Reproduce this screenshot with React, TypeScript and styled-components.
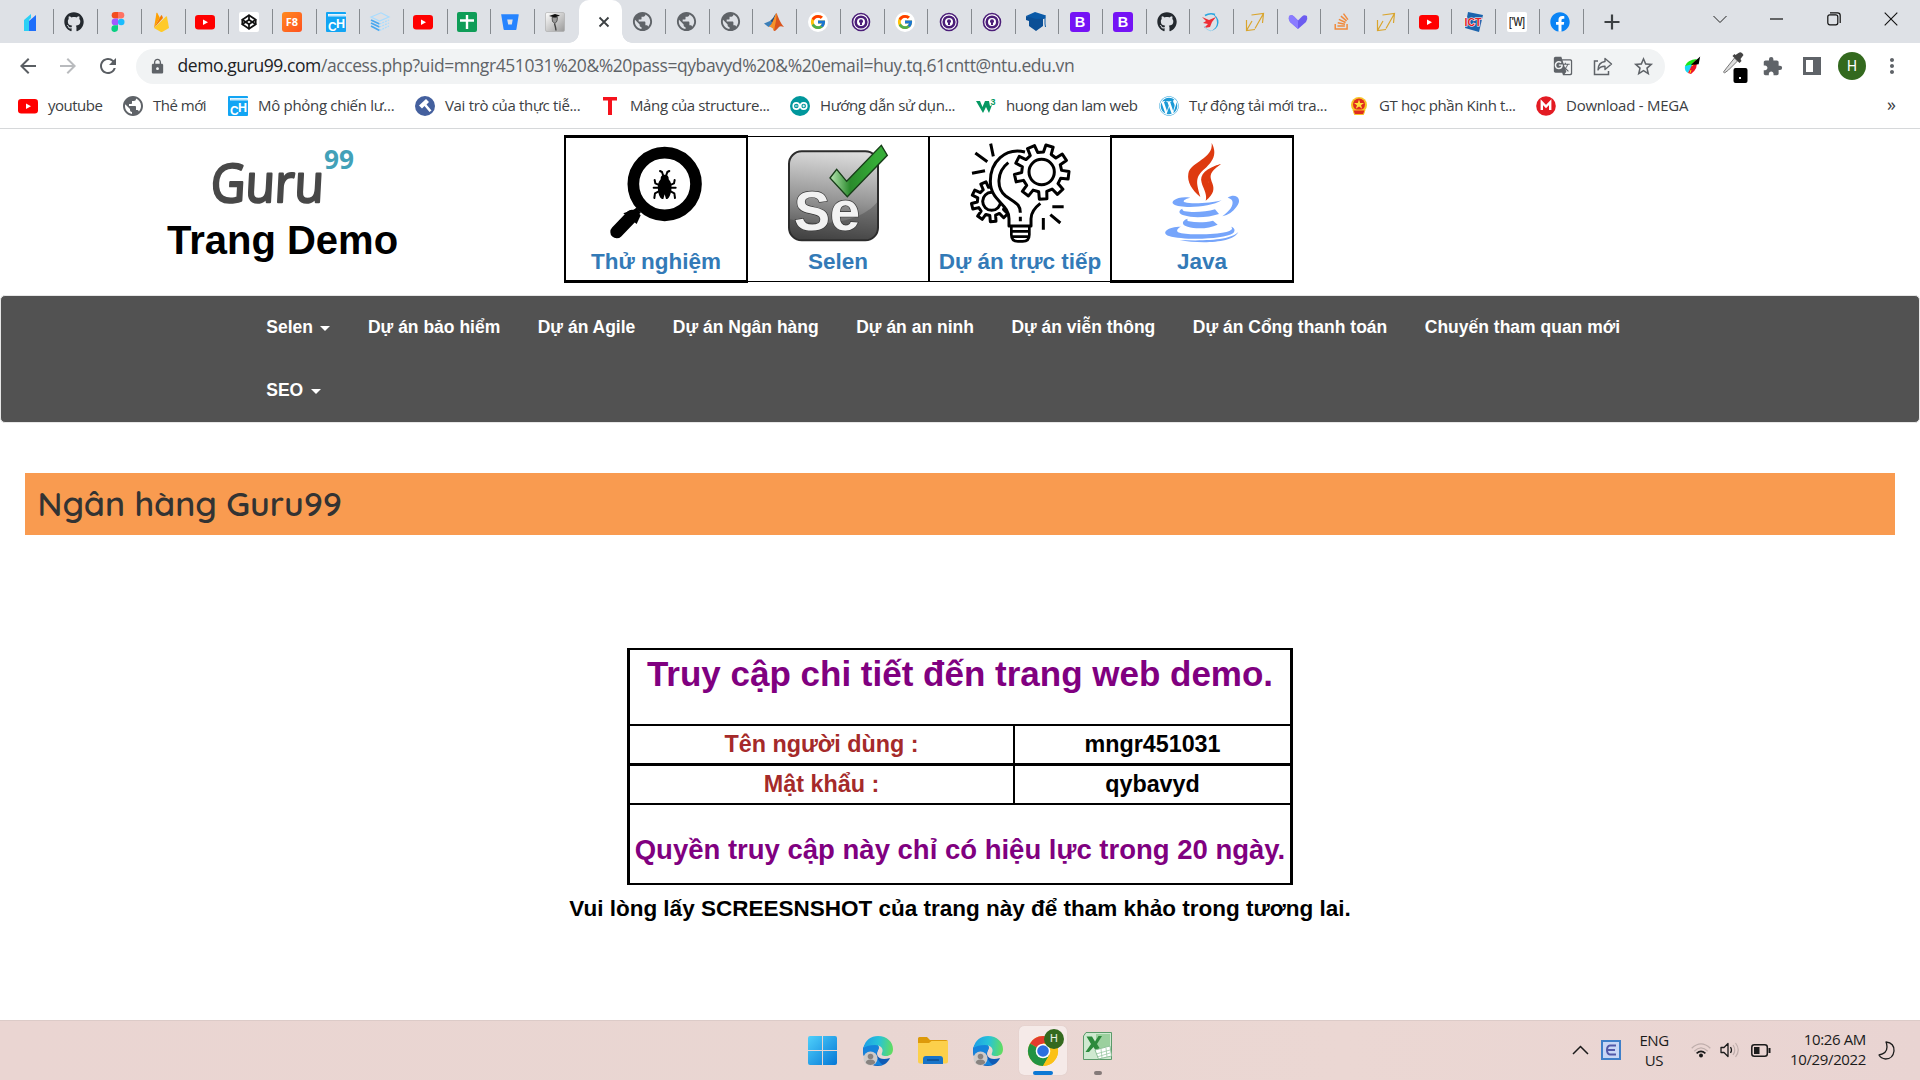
import React from "react";
import styled, { createGlobalStyle, css } from "styled-components";
import { FaGithub, FaBitbucket, FaStackOverflow, FaFacebook, FaWordpress } from "react-icons/fa";
import { FcGoogle } from "react-icons/fc";
import { FiCodepen } from "react-icons/fi";
import { MdArrowBack, MdArrowForward, MdRefresh, MdLock, MdPublic, MdExtension, MdStarBorder, MdGTranslate, MdMoreVert } from "react-icons/md";

const uiFont = `"Segoe UI", "Open Sans", "Noto Sans", sans-serif`;
const pageFont = `Arial, "Liberation Sans", sans-serif`;

const Global = createGlobalStyle`
  * { box-sizing: border-box; }
  html, body { margin: 0; padding: 0; background: #fff; }
  body { overflow: hidden; }
  svg { display: block; flex: none; overflow: visible; }
`;

const Screen = styled.div`
  width: 1920px;
  height: 1080px;
  display: flex;
  flex-direction: column;
  background: #fff;
  font-family: ${pageFont};
`;

/* ---------- tab strip ---------- */

const TabStrip = styled.div`
  height: 43px;
  flex: none;
  display: flex;
  background: #dee1e6;
  padding-left: 10.8px;
`;

const Tab = styled.div<{ $line?: boolean; $shift?: boolean }>`
  width: 43.7px;
  flex: none;
  position: relative;
  display: flex;
  align-items: center;
  padding-left: ${(p) => (p.$shift ? 10.5 : 9.5)}px;
  ${(p) =>
    p.$line &&
    css`
      &::after {
        content: "";
        position: absolute;
        right: 0;
        top: 9px;
        width: 1px;
        height: 25px;
        background: #868a8f;
      }
    `}
`;

const ActiveTab = styled(Tab)`
  background: #fff;
  border-radius: 10px 10px 0 0;
  padding: 0 0 0 6px;
  justify-content: center;
  &::before,
  &::after {
    content: "";
    position: absolute;
    bottom: 0;
    width: 10px;
    height: 10px;
  }
  &::before {
    left: -10px;
    background: radial-gradient(circle at 0 0, transparent 9.5px, #fff 10px);
  }
  &::after {
    right: -10px;
    background: radial-gradient(circle at 100% 0, transparent 9.5px, #fff 10px);
  }
`;

const NewTab = styled.div`
  width: 56px;
  display: flex;
  align-items: center;
  justify-content: center;
`;

const WindowButtons = styled.div`
  margin-left: auto;
  margin-right: 1px;
  display: grid;
  grid-template-columns: repeat(4, 57px);
  place-items: center;
  height: 38px;
`;

/* ---------- toolbar ---------- */

const Toolbar = styled.div`
  height: 46px;
  flex: none;
  display: flex;
  align-items: center;
  padding-left: 16px;
  font-family: ${uiFont};
`;

const NavButton = styled.div<{ $off?: boolean }>`
  width: 24px;
  height: 24px;
  margin-right: 16px;
  color: ${(p) => (p.$off ? "#b9bbbe" : "#5a5e63")};
`;

const Omnibox = styled.div`
  width: 1529px;
  height: 35px;
  border-radius: 18px;
  background: #f1f3f4;
  display: flex;
  align-items: center;
  padding: 0 12px 0 13px;
  color: #5f6368;
`;

const Url = styled.div`
  margin-left: 11.5px;
  flex: 1;
  font-size: 17.5px;
  line-height: 24px;
  padding-bottom: 2px;
  letter-spacing: -0.42px;
  white-space: nowrap;
  color: #5f6368;
  b {
    font-weight: 400;
    color: #202124;
  }
`;

const OmniActions = styled.div`
  display: grid;
  grid-template-columns: repeat(3, 20px);
  gap: 20px;
  place-items: center;
`;

const Extensions = styled.div`
  margin-left: 13px;
  display: grid;
  grid-template-columns: repeat(6, 28px);
  gap: 12px;
  place-items: center;
  color: #5f6368;
`;

const Avatar = styled.div`
  width: 28px;
  height: 28px;
  border-radius: 50%;
  background: #33691e;
  color: #fff;
  font: 14px Roboto, sans-serif;
  display: flex;
  align-items: center;
  justify-content: center;
`;

/* ---------- bookmarks ---------- */

const Bookmarks = styled.div`
  height: 40px;
  flex: none;
  display: flex;
  align-items: center;
  padding: 0 0 6px 18px;
  border-bottom: 1px solid #d6d8da;
  font: 15px/20px ${uiFont};
  color: #3c4043;
`;

const Bookmark = styled.div<{ $w: number; $ls?: number }>`
  width: ${(p) => p.$w}px;
  flex: none;
  display: flex;
  align-items: center;
  gap: 10px;
  white-space: nowrap;
  letter-spacing: ${(p) => p.$ls ?? -0.5}px;
`;

const BookmarkName = styled.span`
  padding-bottom: 1px;
`;

const More = styled.div`
  margin-left: auto;
  margin-right: 24px;
  font-size: 18px;
  line-height: 18px;
  padding-bottom: 3px;
`;

/* ---------- page ---------- */

const Header = styled.header`
  height: 166px;
  flex: none;
  display: flex;
`;

const Brand = styled.div`
  width: 565px;
  margin-right: -1px;
  display: flex;
  flex-direction: column;
  align-items: center;
  padding-top: 11px;
`;

const BrandTitle = styled.div`
  font-weight: 700;
  font-size: 40px;
  line-height: 46px;
  color: #000;
  margin-top: 5px;
`;

const Courses = styled.div`
  margin-top: 6px;
  height: 148px;
  display: grid;
  grid-template-columns: 184px 182px 180px 184px;
`;

const Course = styled.div<{ $kind: "heavy" | "light" | "last" }>`
  display: flex;
  flex-direction: column;
  align-items: center;
  border: solid #000;
  ${(p) =>
    p.$kind === "heavy"
      ? css`
          border-width: 3px 2px;
          padding-top: 5px;
        `
      : css`
          border-width: 1px 0;
          margin: 1px 0;
          padding-top: 6px;
          border-right-width: ${p.$kind === "light" ? 2 : 0}px;
        `}
`;

const CourseName = styled.div`
  font-weight: 700;
  font-size: 22.5px;
  line-height: 27px;
  color: #337ab7;
  margin-top: 5px;
  white-space: nowrap;
`;

const Navbar = styled.nav`
  height: 128px;
  flex: none;
  border: 1px solid #e7e7e7;
  border-radius: 5px;
  background: #525252;
  padding-left: 246.5px;
  padding-right: 230px;
  display: flex;
  flex-wrap: wrap;
  align-content: flex-start;
`;

const NavItem = styled.div`
  height: 63px;
  padding: 0 18.75px 1px;
  display: flex;
  align-items: center;
  font-weight: 700;
  font-size: 17.5px;
  color: #fff;
  white-space: nowrap;
`;

const Caret = styled.span`
  margin-left: 7.5px;
  margin-top: 2px;
  border: 5px solid transparent;
  border-top-color: #fff;
  border-bottom: 0;
`;

const BankTitle = styled.h2`
  margin: 50px 25px 0;
  height: 62px;
  flex: none;
  background: #f99b50;
  padding-left: 12.5px;
  font-family: Quicksand, Inter, sans-serif;
  font-feature-settings: "cv11", "ss03";
  font-weight: 600;
  font-size: 34px;
  line-height: 62px;
  color: #333;
`;

const AccessTable = styled.div`
  width: 666px;
  margin: 113px auto 0;
  flex: none;
  border: solid #000;
  border-width: 2px 3px;
  display: grid;
  grid-template-columns: 383px 277px;
  grid-template-rows: 76px 40px 39px 78px;
  font-weight: 700;
  font-size: 23.33px;
  white-space: nowrap;
`;

const AccessHeading = styled.div`
  grid-column: 1 / 3;
  border-bottom: 2px solid #000;
  text-align: center;
  font-size: 35px;
  line-height: 40px;
  padding-top: 4px;
  color: purple;
`;

const Field = styled.div<{ $last?: boolean; $label?: boolean }>`
  border-bottom: ${(p) => (p.$last ? 2 : 3)}px solid #000;
  color: ${(p) => (p.$label ? "brown" : "#000")};
  text-align: center;
  line-height: 37px;
  ${(p) => !p.$label && "border-left: 2px solid #000;"}
`;

const Validity = styled.div`
  grid-column: 1 / 3;
  text-align: center;
  font-size: 27.5px;
  line-height: 32px;
  padding-top: 29px;
  color: purple;
`;

const Note = styled.div`
  text-align: center;
  font-weight: 700;
  font-size: 22.5px;
  line-height: 27px;
  margin-top: 10px;
  color: #000;
`;

/* ---------- taskbar ---------- */

const Taskbar = styled.footer`
  margin-top: auto;
  height: 60px;
  flex: none;
  display: grid;
  grid-template-columns: 1fr auto 1fr;
  background: linear-gradient(90deg, #ead5d2, #e9d6d2 45%, #ebd7d3 70%, #e9d4d2);
  border-top: 1px solid #dccbc8;
  font-family: ${uiFont};
  color: #1b1b1b;
`;

const Apps = styled.div`
  grid-column: 2;
  display: grid;
  grid-template-columns: repeat(6, 55px);
`;

const TaskApp = styled.div<{ $active?: boolean }>`
  margin: 5px 3px 5px 4px;
  border-radius: 5px;
  position: relative;
  display: flex;
  align-items: center;
  justify-content: center;
  ${(p) => p.$active && "background: #f5eae8; box-shadow: 0 0 1px #cdbab7;"}
`;

const Running = styled.i<{ $w: number; $c: string }>`
  position: absolute;
  bottom: 0;
  left: calc(50% - ${(p) => p.$w / 2}px);
  width: ${(p) => p.$w}px;
  height: 4px;
  border-radius: 2px;
  background: ${(p) => p.$c};
`;

const UserBadge = styled.div`
  position: absolute;
  right: 3px;
  top: 3px;
  width: 20px;
  height: 20px;
  border-radius: 50%;
  background: #33691e;
  color: #e8efe4;
  font: 11px/20px Roboto, sans-serif;
  text-align: center;
`;

const Tray = styled.div`
  display: flex;
  justify-content: flex-end;
  align-items: center;
  padding: 0 13px 1px 0;
`;

const TrayItem = styled.div<{ $w: number }>`
  width: ${(p) => p.$w}px;
  display: flex;
  justify-content: center;
`;

const TrayText = styled.div<{ $w: number; $right?: boolean }>`
  width: ${(p) => p.$w}px;
  font-size: 15px;
  line-height: 20px;
  letter-spacing: ${(p) => (p.$right ? -0.37 : -0.45)}px;
  text-align: ${(p) => (p.$right ? "right" : "center")};
  margin-right: ${(p) => (p.$right ? 0 : 5)}px;
  padding-bottom: ${(p) => (p.$right ? 3 : 1)}px;
  white-space: nowrap;
`;

/* ---------- small icons ---------- */

type S = { size?: number };

const Box = ({ size = 20, children }: S & { children: React.ReactNode }) => (
  <svg width={size} height={size} viewBox="0 0 20 20">{children}</svg>
);

const YouTube = () => (
  <Box>
    <rect x="0" y="3" width="20" height="14.4" rx="3.2" fill="#f00" />
    <path d="M8 7.4 13 10.2 8 13z" fill="#fff" />
  </Box>
);
const Bars = () => (
  <Box>
    <path d="M4 8 11 2v4L9 8v11H4z" fill="#2bd0f5" />
    <path d="M9 9 16 3v16H9z" fill="#1e6ffb" />
  </Box>
);
const Figma = () => (
  <Box>
    <path d="M7 0h3v6.6H7a3.3 3.3 0 0 1 0-6.6z" fill="#f24e1e" />
    <path d="M10 0h3a3.3 3.3 0 0 1 0 6.6h-3z" fill="#ff7262" />
    <path d="M7 6.6h3v6.7H7a3.3 3.3 0 0 1 0-6.7z" fill="#a259ff" />
    <circle cx="13.2" cy="10" r="3.3" fill="#1abcfe" />
    <path d="M7 13.3h3v3.3a3.3 3.3 0 1 1-3-3.3z" fill="#0acf83" />
  </Box>
);
const Firebase = () => (
  <Box>
    <path d="M3 16 5.4 1.2c.1-.5.7-.6 1-.1l2.4 4.6z" fill="#ffa000" />
    <path d="M3 16 10 3.6c.2-.5.8-.5 1 0L12 6z" fill="#f57c00" />
    <path d="M3 16 15 4.4c.4-.3.9-.1 1 .4L18 16l-6.5 3.7q-1 .5-2 0z" fill="#ffca28" />
  </Box>
);
const Codepen = () => (
  <Box>
    <rect width="20" height="20" rx="2" fill="#fff" />
    <FiCodepen x="2" y="2" size={16} color="#111" strokeWidth={2.6} />
  </Box>
);
const F8 = () => (
  <Box>
    <defs>
      <linearGradient id="f8" x1="0" y1="0" x2="1" y2="1">
        <stop stopColor="#ff8a1f" />
        <stop offset="1" stopColor="#ff5120" />
      </linearGradient>
    </defs>
    <rect width="20" height="20" rx="3" fill="url(#f8)" />
    <text x="10" y="14" textAnchor="middle" fontFamily="Open Sans, sans-serif" fontWeight="700" fontSize="11" fill="#fff">F8</text>
  </Box>
);
const BookCH = () => (
  <Box>
    <rect width="20" height="20" rx="1" fill="#12a5f4" />
    <path d="M2 2h18v2.4H2z" fill="#fff" />
    <path d="M2.5 3.2h17" stroke="#7fcdf8" strokeWidth=".7" />
    <text x="2" y="18.5" fontFamily="Liberation Sans, sans-serif" fontWeight="700" fontSize="12" fill="#fff">C</text>
    <text x="10" y="16" fontFamily="Liberation Sans, sans-serif" fontWeight="700" fontSize="12.5" fill="#fff">H</text>
  </Box>
);
const Stack3 = () => (
  <Box>
    <g fill="none" strokeWidth="1.2">
      <path d="M1 5 11 .8 19 5 9.5 9z" stroke="#a8dcff" />
      <path d="m1 8 8.500 4M1 11l8.500 4M1 14l8.500 4.500" stroke="#4aa8f0" strokeWidth="1.8" />
      <path d="m9.500 12 9.500-4M9.500 15l9.500-4M9.500 18.500 19 14" stroke="#a8dcff" strokeDasharray="2 1" />
    </g>
  </Box>
);
const Sheets = () => (
  <Box>
    <rect width="20" height="20" rx="2" fill="#0f9d58" />
    <path d="M3 8.500h14M10 3v14" stroke="#fff" strokeWidth="2.4" />
  </Box>
);
const Grad = () => (
  <Box>
    <defs>
      <linearGradient id="gr" x1="0" y1="0" x2="1" y2="1">
        <stop stopColor="#fff" />
        <stop offset="1" stopColor="#999" />
      </linearGradient>
    </defs>
    <rect x=".5" y=".5" width="19" height="19" rx="1.5" fill="url(#gr)" stroke="#aaa" strokeWidth=".6" />
    <path d="m4 4 6-2 5 1.500-5 2z" fill="#111" />
    <path d="M7 5.500h5.500l-.5 3.500-2 2.500-2.500-2z" fill="#999" stroke="#333" strokeWidth=".7" />
    <path d="M9.500 11.500q1 3 1.500 7" stroke="#444" strokeWidth="1.4" fill="none" />
  </Box>
);
const Globe = () => <MdPublic size={23} color="#5f6368" style={{ marginLeft: -1.5 }} />;
const Matlab = () => (
  <Box>
    <path d="M0 11.500 6 9l3 2-4.500 4z" fill="#3c7fb8" />
    <path d="m6 9 3-3 3-5-3 10z" fill="#1f4f80" />
    <path d="M12.500 1C14 4 16 11 20 15c-3-1-4-1-5.500.5S12 19 10 19c-1-4-2.500-4-5-4 4-3 5.500-11 7.500-14z" fill="#d9541e" />
    <path d="M12.500 1C13 6 11 13 10 19c-1-4-2.500-4-5-4 4-3 5.500-11 7.500-14z" fill="#f5922a" />
  </Box>
);
const Google = () => (
  <Box>
    <circle cx="10" cy="10" r="10" fill="#fff" />
    <FcGoogle x="1.5" y="1.5" size={17} />
  </Box>
);
const Purple = () => (
  <Box>
    <circle cx="10" cy="10" r="8.5" fill="#fff" stroke="#4b1d78" strokeWidth="1.6" />
    <circle cx="10" cy="10" r="5.3" fill="#fff" stroke="#4b1d78" strokeWidth="2.6" />
    <circle cx="10" cy="9.2" r="2" fill="#4b1d78" />
    <path d="M9 10h2v3H9z" fill="#4b1d78" />
  </Box>
);
const Cap = () => (
  <Box>
    <path d="M0 4 9 0l11 3.500-1 3L10 9z" fill="#0a5aa8" />
    <path d="M0 4v4l3 1v5l7 5 7-5V7l2-.5L10 7z" fill="#0b4f96" />
    <path d="M19 5v7l.5 3" stroke="#0a5aa8" fill="none" />
  </Box>
);
const Bootstrap = () => (
  <Box>
    <rect width="20" height="20" rx="3" fill="#7513f5" />
    <text x="10" y="15.2" textAnchor="middle" fontFamily="Liberation Sans, sans-serif" fontWeight="700" fontSize="14.5" fill="#fff">B</text>
  </Box>
);
const Bird = () => (
  <Box>
    <path d="M10 1.500A8.800 8.800 0 0 1 9 19c4-1 7-4 7-8.500S14 3 10 1.500z" fill="#2aa6e0" />
    <path d="M4 3.500q5-3 10-1" stroke="#2aa6e0" strokeWidth="1.5" fill="none" />
    <path d="m1 5 7 3 7-3-4 5-2 5-6 1 4-4-5-1 3-2z" fill="#ee2e36" />
    <path d="M3 14q2 4 7 5" stroke="#9bd3ee" fill="none" />
  </Box>
);
const Gold = () => (
  <Box>
    <path d="M6.500 3 18.500 1.500 17.500 11M18.500 1.500 10 16.500M1.500 8v10.500L10 17.500M1.500 18.500 7 9" fill="none" stroke="#d9a52e" strokeWidth="1.2" />
  </Box>
);
const VHeart = () => (
  <Box>
    <path d="M1 4q3-1.500 5 .5l4 4 4-4q2-2 5-.5 1 3-1 6L10 17 2 10Q0 7 1 4z" fill="#6c5cf0" />
    <path d="M1 4q3-1.500 5 .5l4 4v8.500L2 10Q0 7 1 4z" fill="#8a7bff" />
  </Box>
);
const Ict = () => (
  <Box>
    <path d="M5 0 20 3l-4 17L2 16z" fill="#1b64ad" />
    <text x="1.5" y="14" textLength="17" lengthAdjust="spacingAndGlyphs" fontFamily="Liberation Sans, sans-serif" fontWeight="700" fontSize="11.5" fill="#e21f26" stroke="#fff" strokeWidth="1.2" paintOrder="stroke">ICT</text>
  </Box>
);
const WBox = () => (
  <Box>
    <rect width="20" height="20" rx="2" fill="#fff" />
    <text x="2" y="14" textLength="16" lengthAdjust="spacingAndGlyphs" fontFamily="Liberation Sans, sans-serif" fontSize="12.5" fill="#111" stroke="#111" strokeWidth=".2">['W]</text>
  </Box>
);
const Fb = () => (
  <Box>
    <circle cx="10" cy="10" r="9" fill="#fff" />
    <FaFacebook size={20} color="#0a84f5" />
  </Box>
);
const CloseX = () => (
  <svg width="12" height="12" viewBox="0 0 12 12"><path d="m1.500 1.500 9 9m0-9-9 9" stroke="#3c4043" strokeWidth="1.8" /></svg>
);

const leftTabs = [Bars, () => <FaGithub size={20} color="#24292f" />, Figma, Firebase, YouTube, Codepen, F8, BookCH, Stack3, YouTube, Sheets,
  () => <FaBitbucket size={18} color="#2684ff" />, Grad];
const rightTabs = [Globe, Globe, Globe, Matlab, Google, Purple, Google, Purple, Purple, Cap, Bootstrap, Bootstrap,
  () => <FaGithub size={20} color="#24292f" />, Bird, Gold, VHeart, () => <FaStackOverflow size={19} color="#f08a3c" />, Gold, YouTube, Ict, WBox, Fb];

/* bookmark icons */
const Compass = () => (
  <Box>
    <circle cx="10" cy="10" r="10" fill="#44609e" />
    <path d="M11 3 4 9.500l3 3 2.500-2.500 5 6 2-1.500-5-6 2.500-2.500z" fill="#fff" />
  </Box>
);
const RedT = () => (
  <Box>
    <path d="M3 1h14v3.600h-5V19H8V4.600H3z" fill="#f5121c" />
  </Box>
);
const Arduino = () => (
  <Box>
    <circle cx="10" cy="10" r="10" fill="#00979c" />
    <g fill="none" stroke="#fff" strokeWidth="1.6">
      <circle cx="6.3" cy="10" r="3.1" />
      <circle cx="13.7" cy="10" r="3.1" />
      <path d="M5 10h2.600M12.400 10H15M13.700 8.700v2.600" strokeWidth=".9" />
    </g>
  </Box>
);
const W3 = () => (
  <Box>
    <path d="M0 5h4l2.500 6L9 5h4l1 5 2-1-3 8-3-6-3 6z" fill="#059862" />
    <text x="14.5" y="9" fontFamily="Liberation Sans, sans-serif" fontWeight="700" fontSize="9" fill="#059862">3</text>
  </Box>
);
const Emblem = () => (
  <Box>
    <circle cx="10" cy="9" r="8" fill="#f7c325" />
    <circle cx="10" cy="8.5" r="6" fill="#e02b20" />
    <path d="m10 3.500 1.200 3.500H15l-3 2.200 1.200 3.600L10 10.600l-3.200 2.200L8 9.200 5 7h3.800z" fill="#ffe03a" />
    <path d="M4 14h12l-1.500 4.500h-9z" fill="#e02b20" stroke="#f7c325" />
  </Box>
);
const Mega = () => (
  <Box>
    <circle cx="10" cy="10" r="9.8" fill="#e31b23" />
    <path d="M5.800 14V6.200L10 10.600l4.200-4.400V14" fill="none" stroke="#fff" strokeWidth="2.4" />
  </Box>
);

const bookmarks: { t: string; w: number; ls?: number; i: () => React.ReactNode }[] = [
  { t: "youtube", w: 105, i: YouTube },
  { t: "Thẻ mới", w: 105, i: () => <MdPublic size={24} color="#5f6368" style={{ margin: "0 -2px" }} /> },
  { t: "Mô phỏng chiến lư...", w: 187, ls: -0.3, i: BookCH },
  { t: "Vai trò của thực tiễ...", w: 185, ls: -0.33, i: Compass },
  { t: "Mảng của structure...", w: 190, ls: -0.38, i: RedT },
  { t: "Hướng dẫn sử dụn...", w: 186, ls: -0.38, i: Arduino },
  { t: "huong dan lam web", w: 183, ls: -0.4, i: W3 },
  { t: "Tự động tải mới tra...", w: 190, ls: -0.33, i: () => <FaWordpress size={20} color="#1c9ad6" /> },
  { t: "GT học phần Kinh t...", w: 187, ls: -0.38, i: Emblem },
  { t: "Download - MEGA", w: 190, ls: -0.25, i: Mega },
];

/* ---------- header drawings ---------- */

const Logo = () => (
  <svg width="156" height="72" viewBox="204 140 156 72">
    <g transform="translate(211 202) skewX(-3)">
      <text x="-2" y="0" textLength="113" lengthAdjust="spacingAndGlyphs" fontFamily="Open Sans, sans-serif" fontSize="53" fill="#484848" stroke="#484848" strokeWidth="2.4" strokeLinejoin="round">Guru</text>
    </g>
    <text x="323" y="169" textLength="30" lengthAdjust="spacingAndGlyphs" fontFamily="Open Sans, sans-serif" fontWeight="700" fontSize="26" fill="#42a1b8">99</text>
  </svg>
);

const BugLens = () => (
  <svg width="100" height="100" viewBox="138 39 300 300">
    <circle cx="314" cy="162" r="94" fill="none" stroke="#000" strokeWidth="35" />
    <path d="M236 240 214 260" stroke="#000" strokeWidth="20" />
    <path d="m216 258-46 48" stroke="#000" strokeWidth="38" strokeLinecap="round" />
    <path d="m190 250 34-12 18 18-12 26z" fill="#000" />
    <path d="M314 134c9 0 13 6 12 14 8 8 10 20 8 32-2 14-6 24-12 27h-4l-4-14-4 14h-4c-7-4-11-14-12-27-2-12 0-24 8-32-1-8 3-14 12-14z" fill="#000" />
    <g fill="none" stroke="#000" strokeWidth="6" strokeLinecap="round" strokeLinejoin="round">
      <path d="m310 138-4-12-6-3M318 138l4-12 6-3" />
      <path d="m300 166-14-6-2-10M328 166l14-6 2-10M298 173h-17M330 173h17M300 182l-15 8-2 14M328 182l15 8 2 14" />
    </g>
  </svg>
);

const Selenium = () => (
  <svg width="100" height="100" viewBox="684 39 300 300">
    <defs>
      <linearGradient id="seBg" x1=".5" y1="0" x2=".4" y2="1">
        <stop stopColor="#dcdcdc" />
        <stop offset=".55" stopColor="#949494" />
        <stop offset="1" stopColor="#4a4a4a" />
      </linearGradient>
      <linearGradient id="seTick" x1="0" y1="0" x2="1" y2="0">
        <stop stopColor="#b9e6b4" />
        <stop offset=".35" stopColor="#2a8a2c" />
        <stop offset=".8" stopColor="#35ac37" />
      </linearGradient>
    </defs>
    <rect x="687" y="64" width="267" height="267" rx="38" fill="url(#seBg)" stroke="#2c2c2c" strokeWidth="6" />
    <path d="M690 268c120 28 220 0 262-52v78q0 34-36 34H724q-34 0-34-34z" fill="#333" opacity=".3" />
    <text x="702" y="300" textLength="198" lengthAdjust="spacingAndGlyphs" fontFamily="Liberation Sans, sans-serif" fontWeight="700" fontSize="168" fill="#f2f2f2" stroke="#333" strokeWidth="4" paintOrder="stroke">Se</text>
    <path d="m810 144 20-26 30 36L964 46l18 30L862 200z" fill="url(#seTick)" stroke="#173d18" strokeWidth="4" />
  </svg>
);

const gear = (cx: number, cy: number, teeth: number, r1: number, r2: number, rot: number) => {
  const pts: string[] = [];
  for (let i = 0; i < teeth; i++) {
    const step = (Math.PI * 2) / teeth;
    const a = i * step + rot;
    [[-0.29, r1], [-0.2, r2], [0.2, r2], [0.29, r1]].forEach(([o, r]) => {
      pts.push(`${(cx + Math.cos(a + o * step) * r).toFixed(1)},${(cy + Math.sin(a + o * step) * r).toFixed(1)}`);
    });
  }
  return pts.join(" ");
};

const BulbGears = () => (
  <svg width="100" height="100" viewBox="135 39 300 300">
    <g fill="none" stroke="#000" strokeWidth="9" strokeLinejoin="round">
      <polygon points={gear(200, 214, 9, 43, 61, 0.1)} />
      <circle cx="200" cy="214" r="27" />
      <path d="M300 66C240 52 196 96 196 154c0 60 56 66 56 112v22h70v-22c0-20 8-32 26-46V62z" fill="#fff" stroke="none" />
      <path d="M300 66C240 52 196 96 196 154c0 60 56 66 56 112v22h66v-22c0-20 10-32 28-46" />
      <path d="M250 98c-36 28-36 78-8 100 30 22 44 24 44 50M286 260v14" />
      <path d="M259 290v24q0 20 20 20h14q20 0 20-20v-24M259 304h54M259 320h54" strokeWidth="8" />
      <polygon points={gear(350, 126, 9, 60, 82, 0.12)} fill="#fff" />
      <circle cx="350" cy="126" r="38" fill="#fff" />
      <path d="m151 69 36 26M197 41l8 38M141 130l39-8M382 230h34M376 254l30 25M355 264v35" />
    </g>
  </svg>
);

const JavaCup = () => (
  <svg width="100" height="100" viewBox="681 39 300 300">
    <path d="M860 39c18 34 4 56-26 82-26 24-18 44-8 80-26-22-40-46-36-70 6-36 76-44 70-92z" fill="#de3a10" />
    <path d="M888 102c-34 12-46 24-42 40 6 22 8 24-4 70 26-20 26-36 20-52-6-20-14-30 26-58z" fill="#de3a10" />
    <path d="M888 102c-44 12-66 32-58 56 4 16 14 26 14 52 8-24 16-30 8-50-6-18-2-36 36-58z" fill="#de3a10" />
    <g fill="#76a5fb">
      <path d="M796 203c-40-6-62 12-50 20 22 14 110 10 144-12-30 8-90 12-110 6-10-4 0-10 16-14z" />
      <path d="M908 203c26-16 46 6 26 28-10 14-24 24-42 28 22-16 34-32 30-46-2-6-8-8-14-10z" />
      <path d="M772 236c-14 6-10 16 4 20 30 10 76 6 106-4l-12-14c-26 8-66 10-90 6-6-2-8-4-8-8z" />
      <path d="M788 266c-20 6-18 20 0 24 26 8 64 6 90-6l-14-12c-24 6-50 6-72 2-6-2-6-4-4-8z" />
      <path d="M768 290c-40 0-62 18-36 28 46 14 168 10 192-8 10-10 2-18-6-20 8 6 0 12-14 16-36 8-110 10-140 2-14-4-6-14 4-18z" />
      <path d="M764 330c60 12 160 10 176-24-20 22-90 28-176 24z" />
    </g>
  </svg>
);

/* ---------- taskbar drawings ---------- */

const WinLogo = () => (
  <svg width="29" height="29" viewBox="0 0 29 29" style={{ marginRight: 1 }}>
    <defs>
      <linearGradient id="win" gradientUnits="userSpaceOnUse" x1="0" y1="0" x2="29" y2="29">
        <stop stopColor="#4fd0fb" />
        <stop offset="1" stopColor="#0477d6" />
      </linearGradient>
    </defs>
    <path d="M2 0h12v14H0V2q0-2 2-2zM15 0h12q2 0 2 2v12H15zM0 15h14v14H2q-2 0-2-2zM15 15h14v12q0 2-2 2H15z" fill="url(#win)" />
  </svg>
);

const Edge = () => (
  <svg width="30" height="30" viewBox="0 0 30 30">
    <defs>
      <linearGradient id="edTop" x1="0" y1=".4" x2="1" y2=".5">
        <stop stopColor="#1d9fe6" />
        <stop offset=".5" stopColor="#27c3d8" />
        <stop offset="1" stopColor="#62dd5e" />
      </linearGradient>
    </defs>
    <path d="M0 15C0 9 4 6 10 7c5 1 7 4 5 7-3 6 1 11 12 8-2 5-7 8-12 8C6 30 0 23 0 15z" fill="#0f5bb5" />
    <path d="M0 15C0 9 4 6 10 7c5 1 7 4 5 7-3 5-1 10 5 15-9 2-20-3-20-14z" fill="#1583dc" />
    <path d="M.5 12C2 4 8 0 15 0c9 0 15 6 15 13 0 5-3 7-7 7s-5-1-4-3c2-4-1-8-7-8-5 0-9 1-11.500 3z" fill="url(#edTop)" />
    <circle cx="7.5" cy="22.5" r="7" fill="#cfcbc9" />
    <circle cx="7.5" cy="20.5" r="2.8" fill="#888380" />
    <path d="M2.800 27q0-3.500 4.700-3.500t4.700 3.500q-4.700 4-9.400 0z" fill="#888380" />
  </svg>
);

const Folder = () => (
  <svg width="30" height="27" viewBox="0 0 30 27">
    <path d="M0 1.500Q0 0 1.500 0H9l3 3h16q2 0 2 2v8H0z" fill="#dd9a0a" />
    <path d="M0 6h11l2.500-2H30v20.500q0 2-2 2H2q-2 0-2-2z" fill="#fcd04b" />
    <path d="M5 27v-5q0-3 3-3h14q3 0 3 3v5z" fill="#1874c8" />
    <path d="M9 23h12" stroke="#0c4c8c" strokeWidth="1.5" />
  </svg>
);

const Chrome = () => (
  <svg width="30" height="30" viewBox="0 0 30 30">
    <circle cx="15" cy="15" r="15" fill="#fbc116" />
    <path d="M15 15 2 7.500A15 15 0 0 1 28 7.500H15z" fill="#e33b2e" />
    <path d="M15 15 2 7.500A15 15 0 0 0 15 30l6.500-11.250z" fill="#229342" />
    <path d="M28 7.500A15 15 0 0 1 15 30l6.500-11.250L15 7.500z" fill="#fbc116" />
    <circle cx="15" cy="15" r="7.3" fill="#fff" />
    <circle cx="15" cy="15" r="5.8" fill="#2b6fe0" />
  </svg>
);

const Excel = () => (
  <svg width="29" height="29" viewBox="0 0 29 29" style={{ margin: "0 2px 8px 0" }}>
    <path d="M3 .5h25.500v27H.5V4z" fill="#cfe9d0" stroke="#5b9a6a" />
    <path d="M13 2h14v14H13z" fill="#9bd09e" />
    <path d="M3.500 4.500H9l3 5 3.500-5.500H19l-5 8 5 8h-5.500l-3-5L6 20H2.500L8 12z" fill="#2c8a3c" />
    <path d="m12 18 15-4 1.500 10-13 3z" fill="#fff" stroke="#8fc19a" />
    <path d="m13 22 14-4M14 25l13-4M18 17l1 9M23 16l1 9" stroke="#8fc19a" strokeWidth=".7" />
  </svg>
);

export default function App() {
  return (
    <Screen>
      <Global />
      <TabStrip>
        {leftTabs.map((I, i) => (
          <Tab key={i} $line={i < leftTabs.length - 1}><I /></Tab>
        ))}
        <ActiveTab><CloseX /></ActiveTab>
        {rightTabs.map((I, i) => (
          <Tab key={i} $line $shift><I /></Tab>
        ))}
        <NewTab>
          <svg width="16" height="16" viewBox="0 0 16 16"><path d="M8 .5v15M.5 8h15" stroke="#3c4043" strokeWidth="2.2" /></svg>
        </NewTab>
        <WindowButtons>
          <svg width="14" height="9" viewBox="0 0 14 9"><path d="m.5 1 6.500 6.500L13.500 1" fill="none" stroke="#222" /></svg>
          <svg width="13" height="2" viewBox="0 0 13 2"><path d="M0 1h13" stroke="#111" strokeWidth="1.2" /></svg>
          <svg width="14" height="14" viewBox="0 0 14 14">
            <rect x=".8" y="2.8" width="10" height="10" rx="2" fill="none" stroke="#111" strokeWidth="1.2" />
            <path d="M3 .8h7.500q2.700 0 2.700 2.700V11" fill="none" stroke="#111" strokeWidth="1.2" />
          </svg>
          <svg width="14" height="14" viewBox="0 0 14 14"><path d="m.7.7 12.600 12.600m0-12.600L.7 13.300" stroke="#111" strokeWidth="1.1" /></svg>
        </WindowButtons>
      </TabStrip>

      <Toolbar>
        <NavButton><MdArrowBack size={24} /></NavButton>
        <NavButton $off><MdArrowForward size={24} /></NavButton>
        <NavButton><MdRefresh size={24} /></NavButton>
        <Omnibox>
          <MdLock size={17} />
          <Url><b>demo.guru99.com</b>/access.php?uid=mngr451031%20&%20pass=qybavyd%20&%20email=huy.tq.61cntt@ntu.edu.vn</Url>
          <OmniActions>
            <MdGTranslate size={20} />
            <svg width="20" height="20" viewBox="0 0 20 20">
              <path d="M5 5H1.500v13.500h14V15" fill="none" stroke="#5f6368" strokeWidth="1.5" />
              <path d="M12 2.500 18.500 8 12 13.500v-3.200q-5 0-7 3.700 0-7.500 7-8.500z" fill="none" stroke="#5f6368" strokeWidth="1.4" strokeLinejoin="round" />
            </svg>
            <MdStarBorder size={23} />
          </OmniActions>
        </Omnibox>
        <Extensions>
          <svg width="16" height="18" viewBox="0 0 16 18">
            <path d="M1 9Q3 3 13 2L8 9z" fill="#19e619" />
            <path d="M1 9 9 7l-5 9Q0 14 1 9z" fill="#18d8f5" />
            <path d="M4 16 9 6l3-3q3 8-5 14z" fill="#f01228" />
            <path d="M8 9 14 3M6 16l1-3" stroke="#ffd800" strokeWidth="1" />
            <path d="m9 7 6-5.500-1 5z" fill="#000" stroke="#000" strokeWidth="1.5" />
          </svg>
          <svg width="28" height="34" viewBox="-1.500 0 28 34">
            <path d="M7 19 4 23l1 1 4-3 9-9-3-3z" fill="#ddd" stroke="#777" strokeWidth="1" />
            <path d="m13 7 7 7 2-2-1-2 3-4q-2-4-5-2l-3 2-1-1z" fill="#444" />
            <rect x="14" y="19" width="14" height="15" rx="2" fill="#000" />
            <rect x="19.5" y="28" width="2" height="2" fill="#fff" />
          </svg>
          <MdExtension size={21} />
          <svg width="18" height="18" viewBox="0 0 18 18"><path d="M0 0h18v18H0zM3 3v12h7V3z" fill="#5f6368" fillRule="evenodd" /></svg>
          <Avatar>H</Avatar>
          <MdMoreVert size={24} />
        </Extensions>
      </Toolbar>

      <Bookmarks>
        {bookmarks.map(({ t, w, ls, i: I }) => (
          <Bookmark key={t} $w={w} $ls={ls}><I /><BookmarkName>{t}</BookmarkName></Bookmark>
        ))}
        <More>»</More>
      </Bookmarks>

      <Header>
        <Brand>
          <Logo />
          <BrandTitle>Trang Demo</BrandTitle>
        </Brand>
        <Courses>
          <Course $kind="heavy"><BugLens /><CourseName>Thử nghiệm</CourseName></Course>
          <Course $kind="light"><Selenium /><CourseName>Selen</CourseName></Course>
          <Course $kind="last"><BulbGears /><CourseName>Dự án trực tiếp</CourseName></Course>
          <Course $kind="heavy"><JavaCup /><CourseName>Java</CourseName></Course>
        </Courses>
      </Header>

      <Navbar>
        <NavItem>Selen<Caret /></NavItem>
        <NavItem>Dự án bảo hiểm</NavItem>
        <NavItem>Dự án Agile</NavItem>
        <NavItem>Dự án Ngân hàng</NavItem>
        <NavItem>Dự án an ninh</NavItem>
        <NavItem>Dự án viễn thông</NavItem>
        <NavItem>Dự án Cổng thanh toán</NavItem>
        <NavItem>Chuyến tham quan mới</NavItem>
        <NavItem>SEO<Caret /></NavItem>
      </Navbar>

      <BankTitle>Ngân hàng Guru99</BankTitle>

      <AccessTable>
        <AccessHeading>Truy cập chi tiết đến trang web demo.</AccessHeading>
        <Field $label>Tên người dùng :</Field>
        <Field>mngr451031</Field>
        <Field $label $last>Mật khẩu :</Field>
        <Field $last>qybavyd</Field>
        <Validity>Quyền truy cập này chỉ có hiệu lực trong 20 ngày.</Validity>
      </AccessTable>
      <Note>Vui lòng lấy SCREESNSHOT của trang này để tham khảo trong tương lai.</Note>

      <Taskbar>
        <Apps>
          <TaskApp><WinLogo /></TaskApp>
          <TaskApp><Edge /></TaskApp>
          <TaskApp><Folder /></TaskApp>
          <TaskApp><Edge /></TaskApp>
          <TaskApp $active><Chrome /><UserBadge>H</UserBadge><Running $w={20} $c="#0c78d4" /></TaskApp>
          <TaskApp><Excel /><Running $w={8} $c="#857a79" /></TaskApp>
        </Apps>
        <Tray>
          <TrayItem $w={30}><svg width="17" height="10" viewBox="0 0 17 10"><path d="m1 9 7.500-7.500L16 9" fill="none" stroke="#1b1b1b" strokeWidth="1.5" /></svg></TrayItem>
          <TrayItem $w={31}>
            <svg width="20" height="20" viewBox="0 0 20 20">
              <rect x="1" y="1" width="18" height="18" fill="#c9d6f5" stroke="#3f7fc9" strokeWidth="2" />
              <path d="M15 5.500H9Q6 6 6 10t3 4.500h6M6 10h8" fill="none" stroke="#5358a8" strokeWidth="2" />
            </svg>
          </TrayItem>
          <TrayText $w={56}>ENG<br />US</TrayText>
          <TrayItem $w={28}>
            <svg width="20" height="15" viewBox="0 0 20 15">
              <g fill="none" strokeWidth="1.3">
                <path d="M.7 5.300Q10-3.500 19.300 5.300M3.300 8.200Q10 1.500 16.700 8.200" stroke="#bfaeac" />
                <path d="M5.600 10.400q4.400-4.200 8.800 0" stroke="#1b1b1b" strokeWidth="1.6" />
              </g>
              <circle cx="10" cy="12.5" r="2" fill="#1b1b1b" />
            </svg>
          </TrayItem>
          <TrayItem $w={30}>
            <svg width="20" height="16" viewBox="0 0 20 16">
              <path d="M1 5.500h3l4-4v13l-4-4H1z" fill="none" stroke="#1b1b1b" strokeWidth="1.3" strokeLinejoin="round" />
              <path d="M10.500 5q2 3 0 6" fill="none" stroke="#1b1b1b" strokeWidth="1.3" />
              <path d="M13 3q3.500 5 0 10M15.500 1q5.500 7 0 14" fill="none" stroke="#bfaeac" strokeWidth="1.2" />
            </svg>
          </TrayItem>
          <TrayItem $w={32}>
            <svg width="20" height="13" viewBox="0 0 20 13">
              <rect x=".8" y=".8" width="15.5" height="11.4" rx="2.5" fill="none" stroke="#1b1b1b" strokeWidth="1.5" />
              <rect x="3" y="3" width="5.5" height="7" fill="#1b1b1b" />
              <path d="M17.500 4h2v5h-2z" fill="#1b1b1b" />
            </svg>
          </TrayItem>
          <TrayText $w={89} $right>10:26 AM<br />10/29/2022</TrayText>
          <TrayItem $w={41}>
            <svg width="17" height="19" viewBox="0 0 17 19"><path d="M8 1q8.500 1 8 9-1 8-8.500 8Q3 17.500 1 14q8-1.500 8-8 0-3-1-5z" fill="none" stroke="#1b1b1b" strokeWidth="1.3" strokeLinejoin="round" /></svg>
          </TrayItem>
        </Tray>
      </Taskbar>
    </Screen>
  );
}
